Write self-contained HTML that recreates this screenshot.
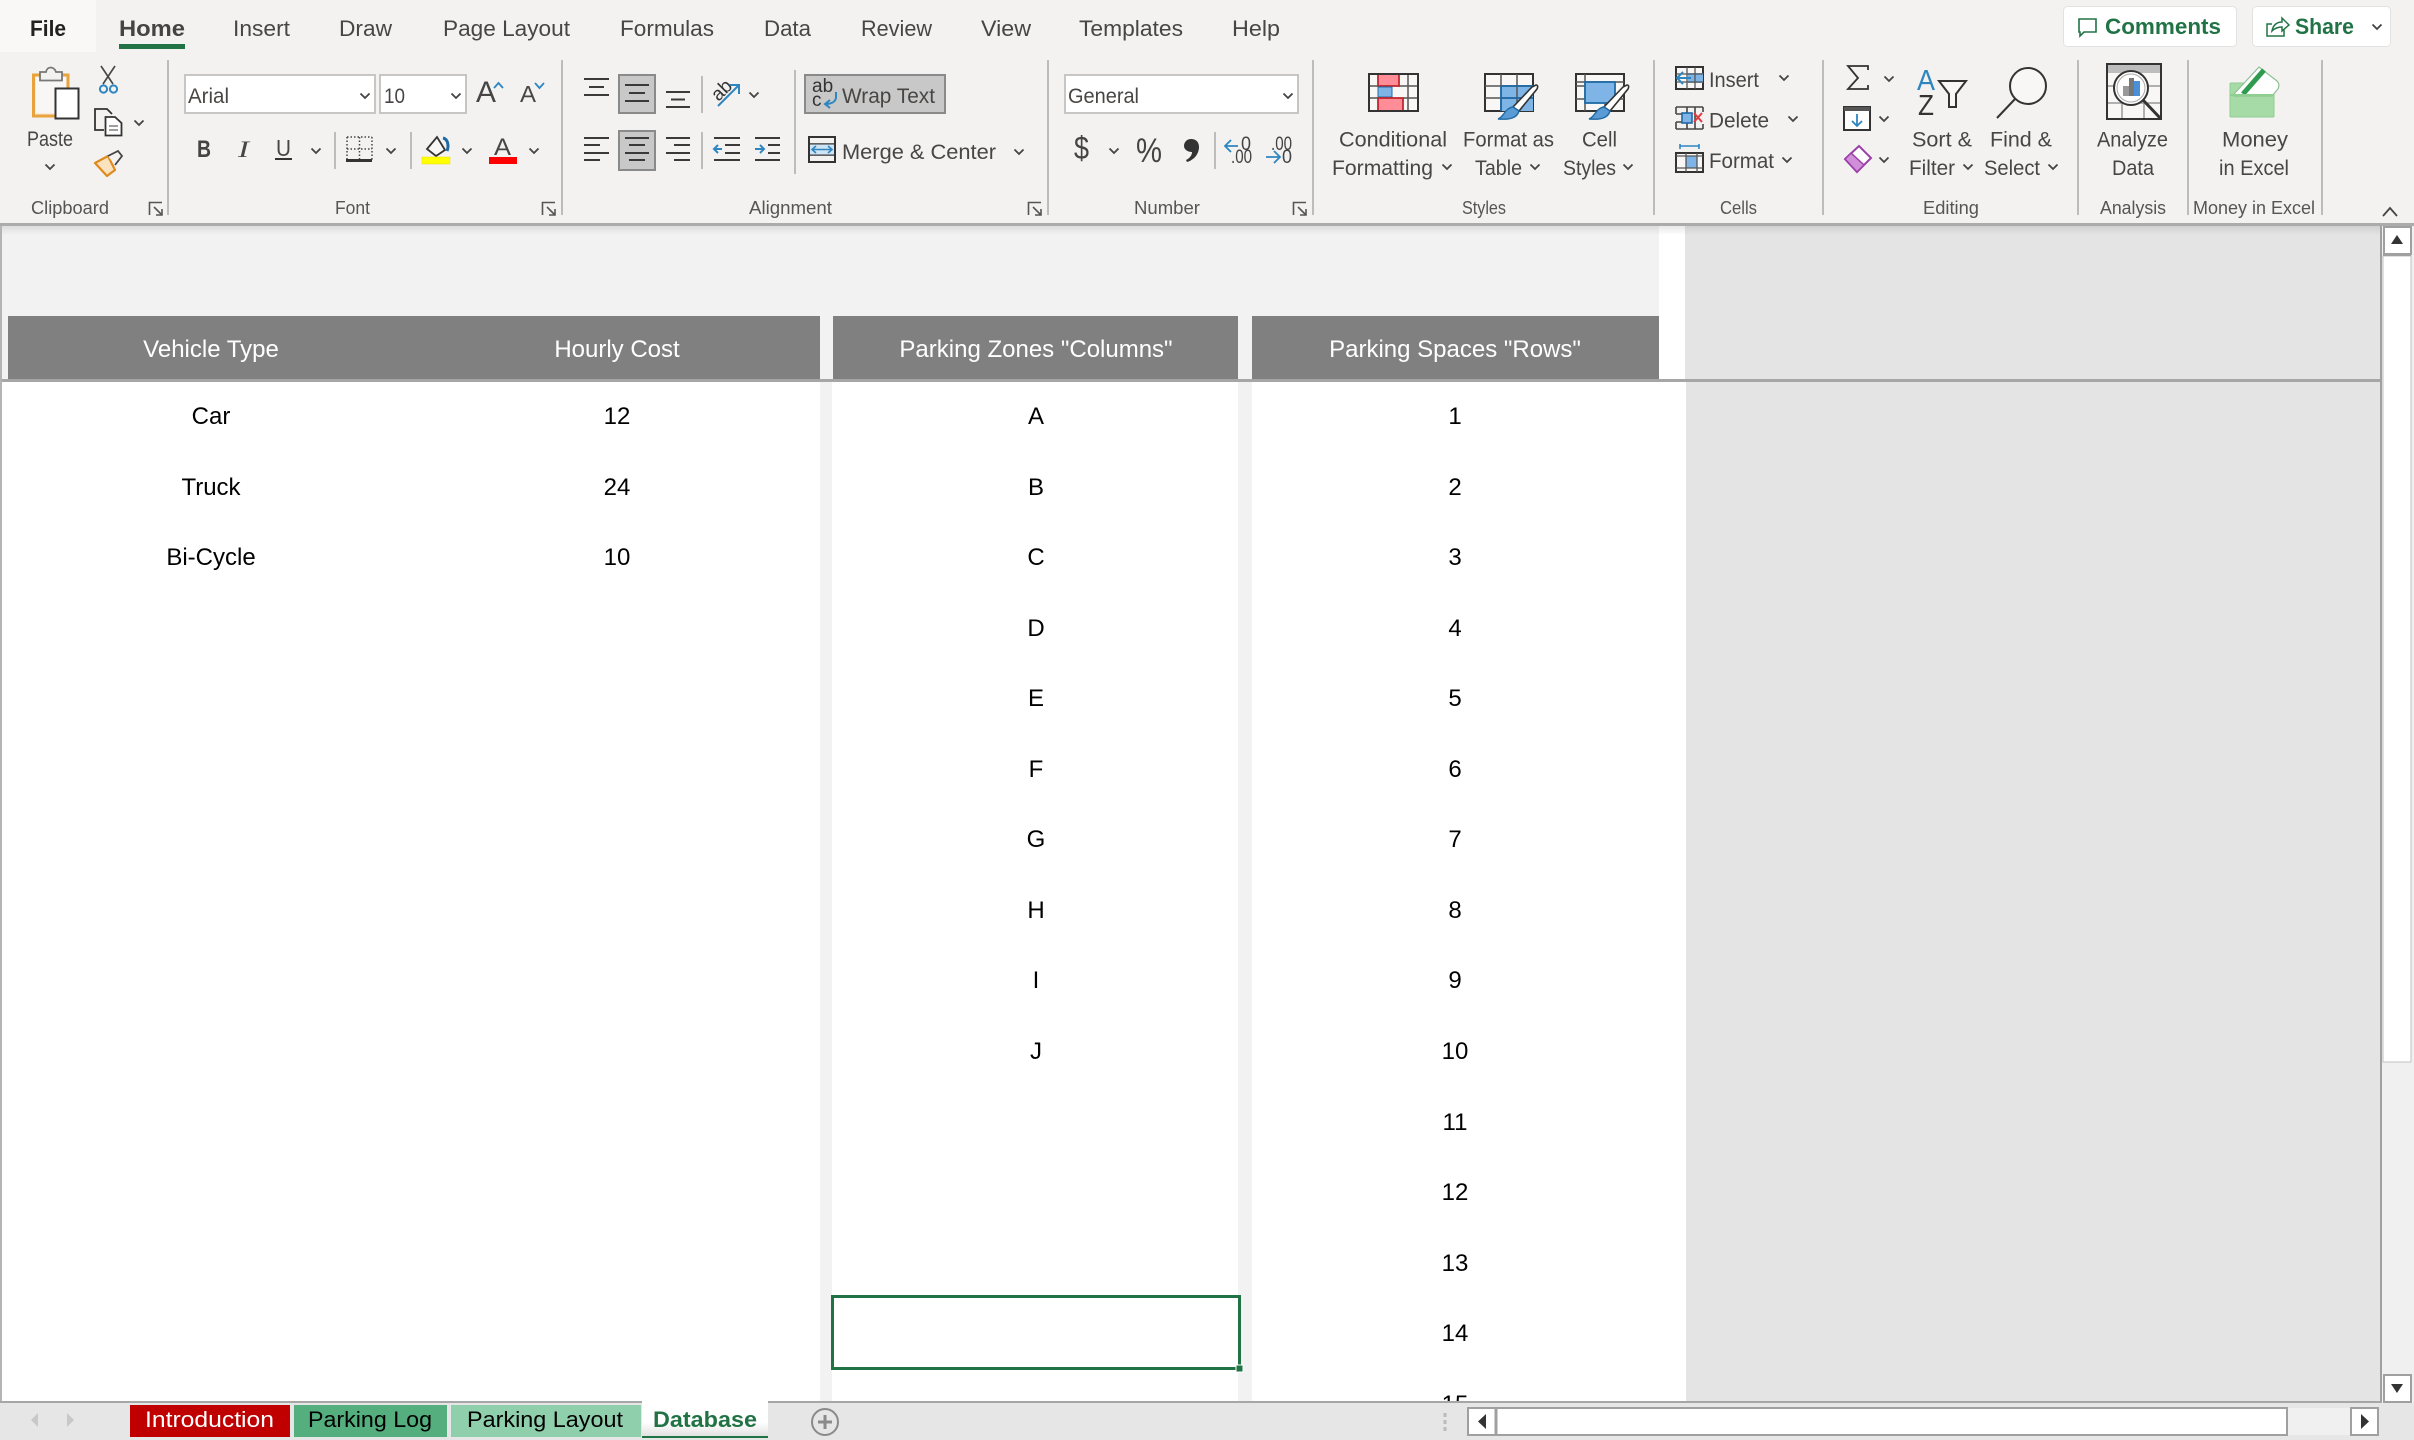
<!DOCTYPE html>
<html><head><meta charset="utf-8"><title>Excel</title>
<style>
html,body{margin:0;padding:0;background:#f3f2f1;width:2414px;height:1440px;overflow:hidden}
svg{display:block;position:absolute;left:0;top:0}
text{font-family:"Liberation Sans",Arial,sans-serif;fill:#484644;font-size:21px}
.t{font-size:22px}
.g{font-size:18px;fill:#555}
.c{font-size:24px;fill:#000;text-anchor:middle}
.h{font-size:24px;fill:#fff;text-anchor:middle}
.s{fill:none;stroke:#333;stroke-width:2}
.sep{stroke:#bcbcbc;stroke-width:2}
.l{stroke:#3a3a3a;stroke-width:2}
</style></head><body>
<svg width="2414" height="1440" viewBox="0 0 2414 1440" xmlns="http://www.w3.org/2000/svg" stroke-linejoin="miter">
<defs>
<path id="v" d="M-4.5-2.5L0 2L4.5-2.5" fill="none" stroke="#444" stroke-width="1.8"/>
<g id="launch" fill="none" stroke="#555" stroke-width="1.6"><path d="M.5 13V.5H13"/><path d="M5 5L13 13M13 7V13H7"/></g>
<linearGradient id="sh" x1="0" y1="0" x2="0" y2="1"><stop offset="0" stop-color="#000" stop-opacity=".09"/><stop offset="1" stop-color="#000" stop-opacity="0"/></linearGradient>
<linearGradient id="db" x1="0" y1="0" x2="0" y2="1"><stop offset="0" stop-color="#fff"/><stop offset=".6" stop-color="#fff"/><stop offset="1" stop-color="#e2e2e2"/></linearGradient>
</defs>

<!-- ribbon bg -->
<rect width="2414" height="1440" fill="#f3f2f1"/>
<rect width="96" height="52" fill="#f9f8f7"/>

<!-- menu tabs -->
<text x="30" y="36" class="t" style="fill:#222;font-weight:700" textLength="36" lengthAdjust="spacingAndGlyphs">File</text>
<text x="119" y="36" class="t" style="font-weight:700;fill:#444" textLength="66" lengthAdjust="spacingAndGlyphs">Home</text>
<rect x="119" y="44" width="66" height="5" fill="#217346"/>
<text x="233" y="36" class="t" textLength="57" lengthAdjust="spacingAndGlyphs">Insert</text>
<text x="339" y="36" class="t" textLength="53" lengthAdjust="spacingAndGlyphs">Draw</text>
<text x="443" y="36" class="t" textLength="127" lengthAdjust="spacingAndGlyphs">Page Layout</text>
<text x="620" y="36" class="t" textLength="94" lengthAdjust="spacingAndGlyphs">Formulas</text>
<text x="764" y="36" class="t" textLength="47" lengthAdjust="spacingAndGlyphs">Data</text>
<text x="861" y="36" class="t" textLength="71" lengthAdjust="spacingAndGlyphs">Review</text>
<text x="981" y="36" class="t" textLength="50" lengthAdjust="spacingAndGlyphs">View</text>
<text x="1079" y="36" class="t" textLength="104" lengthAdjust="spacingAndGlyphs">Templates</text>
<text x="1232" y="36" class="t" textLength="48" lengthAdjust="spacingAndGlyphs">Help</text>

<!-- comments/share -->
<rect x="2063.5" y="6.5" width="173" height="40" rx="4" fill="#fff" stroke="#e4e2e0"/>
<path d="M2079 19H2096V32H2084L2080 36V32H2079Z" fill="none" stroke="#217346" stroke-width="1.6"/>
<text x="2105" y="34" class="t" style="font-weight:700;fill:#217346" textLength="116" lengthAdjust="spacingAndGlyphs">Comments</text>
<rect x="2252.5" y="6.5" width="138" height="40" rx="4" fill="#fff" stroke="#e4e2e0"/>
<path d="M2272 24H2267V36H2284V30M2272 31C2273 25 2277 22 2282 22V18L2289 25L2282 31V27C2278 27 2275 28 2272 31Z" fill="none" stroke="#217346" stroke-width="1.5"/>
<text x="2295" y="34" class="t" style="font-weight:700;fill:#217346" textLength="59" lengthAdjust="spacingAndGlyphs">Share</text>
<use href="#v" x="2377" y="27"/>

<!-- separators -->
<line class="sep" x1="168" y1="60" x2="168" y2="215"/>
<line class="sep" x1="562" y1="60" x2="562" y2="215"/>
<line class="sep" x1="1048" y1="60" x2="1048" y2="215"/>
<line class="sep" x1="1313" y1="60" x2="1313" y2="215"/>
<line class="sep" x1="1654" y1="60" x2="1654" y2="215"/>
<line class="sep" x1="1823" y1="60" x2="1823" y2="215"/>
<line class="sep" x1="2078" y1="60" x2="2078" y2="215"/>
<line class="sep" x1="2188" y1="60" x2="2188" y2="215"/>
<line class="sep" x1="2322" y1="60" x2="2322" y2="215"/>
<line class="sep" x1="335" y1="132" x2="335" y2="169"/>
<line class="sep" x1="411" y1="132" x2="411" y2="169"/>
<line class="sep" x1="702" y1="76" x2="702" y2="113"/>
<line class="sep" x1="702" y1="132" x2="702" y2="169"/>
<line class="sep" x1="795" y1="70" x2="795" y2="174"/>
<line class="sep" x1="1215" y1="132" x2="1215" y2="169"/>

<!-- group labels -->
<text x="31" y="214" class="g" textLength="78" lengthAdjust="spacingAndGlyphs">Clipboard</text>
<text x="335" y="214" class="g" textLength="35" lengthAdjust="spacingAndGlyphs">Font</text>
<text x="749" y="214" class="g" textLength="83" lengthAdjust="spacingAndGlyphs">Alignment</text>
<text x="1134" y="214" class="g" textLength="66" lengthAdjust="spacingAndGlyphs">Number</text>
<text x="1462" y="214" class="g" textLength="44" lengthAdjust="spacingAndGlyphs">Styles</text>
<text x="1720" y="214" class="g" textLength="37" lengthAdjust="spacingAndGlyphs">Cells</text>
<text x="1923" y="214" class="g" textLength="56" lengthAdjust="spacingAndGlyphs">Editing</text>
<text x="2100" y="214" class="g" textLength="66" lengthAdjust="spacingAndGlyphs">Analysis</text>
<text x="2193" y="214" class="g" textLength="122" lengthAdjust="spacingAndGlyphs">Money in Excel</text>
<use href="#launch" x="149" y="202"/>
<use href="#launch" x="542" y="202"/>
<use href="#launch" x="1028" y="202"/>
<use href="#launch" x="1293" y="202"/>
<path d="M2383 216L2390 208L2397 216" fill="none" stroke="#444" stroke-width="1.8"/>

<!-- clipboard -->
<path d="M43 75H33.5V116H57" fill="#f8ead6" stroke="#e8a33d" stroke-width="3"/>
<path d="M58 75H68V88" fill="none" stroke="#e8a33d" stroke-width="3"/>
<path d="M36 77H66V87H56V113H36Z" fill="#f8f7f5"/>
<path d="M40 80.5V72H46C47 66 54 66 56 72H62V80.5Z" fill="#f3f2f1" stroke="#777" stroke-width="1.8"/>
<rect x="55.5" y="88.5" width="23" height="30" fill="#fff" stroke="#333" stroke-width="2"/>
<text x="27" y="146" textLength="46" lengthAdjust="spacingAndGlyphs">Paste</text>
<use href="#v" x="50" y="167"/>
<path d="M101 66L113 84M115 66L103 84" fill="none" stroke="#444" stroke-width="1.6"/>
<circle cx="103.5" cy="89" r="3.6" fill="none" stroke="#2e86c1" stroke-width="2"/>
<circle cx="113.5" cy="89" r="3.6" fill="none" stroke="#2e86c1" stroke-width="2"/>
<path d="M104 130H95V109H107L112 114" fill="none" stroke="#333" stroke-width="1.8"/>
<path d="M105.5 117H115L121.5 123V135.5H105.5Z" fill="#fff" stroke="#333" stroke-width="1.8"/>
<path d="M109 126H118M109 130H118" stroke="#666" stroke-width="1.3"/>
<use href="#v" x="139" y="123"/>
<path d="M95 163L108 156L115 170L107 176Z" fill="#fbe3bf" stroke="#e08a1e" stroke-width="2.2" stroke-linejoin="round"/>
<path d="M108 156L118 151L122 156L115 165" fill="#f3f2f1" stroke="#444" stroke-width="1.8"/>

<!-- font -->
<rect x="185" y="75" width="190" height="38" fill="#fff" stroke="#c8c6c4" stroke-width="2"/>
<text x="188" y="103" textLength="41" lengthAdjust="spacingAndGlyphs">Arial</text>
<use href="#v" x="365" y="96"/>
<rect x="380" y="75" width="86" height="38" fill="#fff" stroke="#c8c6c4" stroke-width="2"/>
<text x="384" y="103" textLength="21" lengthAdjust="spacingAndGlyphs">10</text>
<use href="#v" x="456" y="96"/>
<text x="476" y="102" style="font-size:30px" textLength="20" lengthAdjust="spacingAndGlyphs">A</text>
<path d="M494 88L498.5 83L503 88" fill="none" stroke="#2e86c1" stroke-width="1.8"/>
<text x="520" y="102" style="font-size:23px" textLength="16" lengthAdjust="spacingAndGlyphs">A</text>
<path d="M535 83L539.5 88L544 83" fill="none" stroke="#2e86c1" stroke-width="1.8"/>
<text x="197" y="157" style="font-size:24px;font-weight:700;fill:#444" textLength="14" lengthAdjust="spacingAndGlyphs">B</text>
<text x="238" y="157" style="font-size:23px;font-style:italic;font-family:'Liberation Serif',serif" textLength="11" lengthAdjust="spacingAndGlyphs">I</text>
<text x="276" y="156" style="font-size:23px" textLength="15" lengthAdjust="spacingAndGlyphs">U</text>
<rect x="275" y="158" width="17" height="2" fill="#333"/>
<use href="#v" x="316" y="151"/>
<path d="M347 137H372M347 149H372M347 137V160M372 137V160M359.5 137V160" fill="none" stroke="#444" stroke-width="1.5" stroke-dasharray="1.5 2"/>
<rect x="346" y="159" width="26" height="3" fill="#333"/>
<use href="#v" x="391" y="151"/>
<path d="M427 149L437 137L445 150L436 156Z" fill="#f8f7f5" stroke="#333" stroke-width="1.8"/>
<path d="M443 138C448 139 449 146 447 151" fill="none" stroke="#1f6aa5" stroke-width="3"/>
<rect x="422" y="157" width="28" height="7" fill="#ffff00" stroke="#eedd00" stroke-width=".5"/>
<use href="#v" x="467" y="151"/>
<text x="494" y="155" style="font-size:24px" textLength="17" lengthAdjust="spacingAndGlyphs">A</text>
<rect x="489" y="157" width="28" height="7" fill="#ff0000"/>
<use href="#v" x="534" y="151"/>

<!-- alignment -->
<rect x="619" y="75" width="36" height="38" fill="#c8c8c8" stroke="#8a8a8a" stroke-width="2"/>
<rect x="619" y="131" width="36" height="39" fill="#c8c8c8" stroke="#8a8a8a" stroke-width="2"/>
<path class="l" d="M584 79H609M589 87H604M584 95H609M625 85H649M629 93H645M625 101H649M666 92H690M671 99.5H685M666 107H690"/>
<path class="l" d="M584 138H609M584 145H600M584 153H609M584 160H600"/>
<path class="l" d="M625 138H649M629 145H645M625 153H649M629 160H645"/>
<path class="l" d="M666 138H690M674 145H690M666 153H690M674 160H690"/>
<g transform="translate(714,80)">
<text x="-3" y="16" style="font-size:19px;fill:#333" transform="rotate(-45 8 10)">ab</text>
<path d="M4 26L24 6M16 5H25V14" fill="none" stroke="#2e86c1" stroke-width="2"/>
</g>
<use href="#v" x="754" y="95"/>
<path class="l" d="M714 138H740M725 145H740M725 153H740M714 160H740"/>
<path d="M722 149H714M718 145L714 149L718 153" fill="none" stroke="#2e86c1" stroke-width="2"/>
<path class="l" d="M755 138H780M768 145H780M768 153H780M755 160H780"/>
<path d="M755 149H764M760 145L764 149L760 153" fill="none" stroke="#2e86c1" stroke-width="2"/>
<rect x="805" y="75" width="140" height="38" fill="#c8c8c8" stroke="#8a8a8a" stroke-width="2"/>
<text x="812" y="92" style="font-size:19px;fill:#333">ab</text>
<text x="812" y="106" style="font-size:19px;fill:#333">c</text>
<path d="M836 92V97C836 102 831 104 825 104M830 100L825 104L830 108" fill="none" stroke="#2e86c1" stroke-width="2"/>
<text x="842" y="103" textLength="93" lengthAdjust="spacingAndGlyphs">Wrap Text</text>
<rect x="809" y="137" width="26" height="25" fill="#f3f2f1" stroke="#333" stroke-width="2"/>
<path d="M809 144H835M809 155H835" stroke="#333" stroke-width="1.5"/>
<rect x="810" y="144.5" width="24" height="10" fill="#cfe4f4"/>
<path d="M812 149.5H832M816 146L812 149.5L816 153M828 146L832 149.5L828 153" fill="none" stroke="#2e86c1" stroke-width="1.6"/>
<text x="842" y="159" textLength="154" lengthAdjust="spacingAndGlyphs">Merge &amp; Center</text>
<use href="#v" x="1019" y="152"/>

<!-- number -->
<rect x="1065" y="75" width="233" height="38" fill="#fff" stroke="#c8c6c4" stroke-width="2"/>
<text x="1068" y="103" textLength="71" lengthAdjust="spacingAndGlyphs">General</text>
<use href="#v" x="1288" y="96"/>
<text x="1074" y="159" style="font-size:32px;fill:#444" textLength="15" lengthAdjust="spacingAndGlyphs">$</text>
<use href="#v" x="1114" y="151"/>
<text x="1136" y="162" style="font-size:34px;fill:#444" textLength="26" lengthAdjust="spacingAndGlyphs">%</text>
<path d="M1191 139C1197 139 1199 143 1199 147C1199 154 1194 160 1187 162L1186 160C1190 158 1192 155 1192 152C1187 152 1184 149 1184 146C1184 142 1187 139 1191 139Z" fill="#333"/>
<path d="M1226 146H1238M1231 140L1225 146L1231 152" fill="none" stroke="#2e86c1" stroke-width="1.8"/>
<text x="1241" y="150" style="font-size:19px;fill:#444" textLength="10" lengthAdjust="spacingAndGlyphs">0</text>
<text x="1231" y="163" style="font-size:19px;fill:#444" textLength="21" lengthAdjust="spacingAndGlyphs">.00</text>
<text x="1271" y="150" style="font-size:19px;fill:#444" textLength="21" lengthAdjust="spacingAndGlyphs">.00</text>
<path d="M1266 157H1279M1274 151L1280 157L1274 163" fill="none" stroke="#2e86c1" stroke-width="1.8"/>
<text x="1282" y="163" style="font-size:19px;fill:#444" textLength="10" lengthAdjust="spacingAndGlyphs">0</text>

<!-- styles -->
<g>
<rect x="1369" y="74" width="49" height="37" fill="#f8f7f5"/>
<rect x="1378" y="74" width="21" height="12" fill="#ff8c96" stroke="#c0272d" stroke-width="1.8"/>
<rect x="1378" y="87" width="14" height="10" fill="#7fb5e6" stroke="#1f6aa5" stroke-width="1"/>
<rect x="1378" y="98" width="25" height="13" fill="#ff8c96" stroke="#c0272d" stroke-width="1.8"/>
<path d="M1369 86H1378M1399 86H1417M1369 98H1378M1403 98H1417M1408 74V111" stroke="#555" stroke-width="1.5"/>
<rect x="1369" y="74" width="49" height="37" fill="none" stroke="#333" stroke-width="2"/>
</g>
<g>
<rect x="1485" y="74" width="48" height="37" fill="#f8f7f5" stroke="#333" stroke-width="2"/>
<rect x="1501" y="85" width="32" height="26" fill="#7fb5e6"/>
<path d="M1485 86H1533M1485 98H1533M1501 74V111M1517 74V111" stroke="#555" stroke-width="1.5"/>
<path d="M1501 86H1533M1501 98H1533M1501 86V111" stroke="#1f6aa5" stroke-width="1.8" fill="none"/>
<path d="M1536 85C1538 85 1538 87 1537 89L1519 111L1513 107L1532 87Z" fill="#fff" stroke="#333" stroke-width="1.6"/>
<path d="M1513 107L1519 111C1517 118 1510 120 1498 119C1504 117 1505 108 1513 107Z" fill="#5b9bd5" stroke="#1f6aa5" stroke-width="1.4"/>
</g>
<g>
<rect x="1576" y="74" width="48" height="37" fill="#f8f7f5" stroke="#333" stroke-width="2"/>
<path d="M1585 86H1576M1576 99H1624M1624 82H1576M1585 74V111M1605 99V111" stroke="#555" stroke-width="1.5"/>
<rect x="1585" y="82" width="30" height="21" fill="#7fb5e6" stroke="#1f6aa5" stroke-width="1.8"/>
<path d="M1627 85C1629 85 1629 87 1628 89L1610 111L1604 107L1623 87Z" fill="#fff" stroke="#333" stroke-width="1.6"/>
<path d="M1604 107L1610 111C1608 118 1601 120 1589 119C1595 117 1596 108 1604 107Z" fill="#5b9bd5" stroke="#1f6aa5" stroke-width="1.4"/>
</g>
<text x="1339" y="146.5" textLength="108" lengthAdjust="spacingAndGlyphs">Conditional</text>
<text x="1332" y="175" textLength="101" lengthAdjust="spacingAndGlyphs">Formatting</text>
<use href="#v" x="1447" y="167"/>
<text x="1463" y="146.5" textLength="91" lengthAdjust="spacingAndGlyphs">Format as</text>
<text x="1475" y="175" textLength="47" lengthAdjust="spacingAndGlyphs">Table</text>
<use href="#v" x="1535" y="167"/>
<text x="1582" y="146.5" textLength="35" lengthAdjust="spacingAndGlyphs">Cell</text>
<text x="1563" y="175" textLength="53" lengthAdjust="spacingAndGlyphs">Styles</text>
<use href="#v" x="1628" y="167"/>

<!-- cells -->
<g>
<rect x="1676" y="67" width="27" height="22" fill="#f8f7f5" stroke="#333" stroke-width="2"/>
<rect x="1688" y="73" width="15" height="10" fill="#7fb5e6"/>
<path d="M1676 74H1703M1676 82H1703M1687 67V89M1695 67V89" stroke="#555" stroke-width="1.3"/>
<path d="M1691 78H1677M1683 72L1677 78L1683 84" fill="none" stroke="#2e86c1" stroke-width="2"/>
</g>
<text x="1709" y="87" textLength="50" lengthAdjust="spacingAndGlyphs">Insert</text>
<use href="#v" x="1784" y="78"/>
<g>
<path d="M1676 107H1703M1676 129H1703M1676 107V114M1676 122V129M1703 107V112M1703 124V129M1676 114H1684M1676 122H1684M1687 107V129M1695 107V129" fill="none" stroke="#444" stroke-width="1.6"/>
<rect x="1682" y="113" width="10" height="10" fill="#7fb5e6" stroke="#1f6aa5" stroke-width="1.6"/>
<path d="M1694 113L1702 122M1702 113L1694 122" stroke="#e03a3a" stroke-width="2"/>
</g>
<text x="1709" y="127.500" textLength="60" lengthAdjust="spacingAndGlyphs">Delete</text>
<use href="#v" x="1793" y="119"/>
<g>
<rect x="1676" y="153" width="27" height="19" fill="#f8f7f5" stroke="#333" stroke-width="2"/>
<rect x="1686" y="156" width="11" height="12" fill="#7fb5e6" stroke="#2e86c1"/>
<path d="M1676 156H1703M1676 168H1703M1686 153V172M1697 153V172" stroke="#555" stroke-width="1.3"/>
<path d="M1680 146H1699M1680 144V149M1699 144V149" stroke="#2e86c1" stroke-width="1.6" fill="none"/>
</g>
<text x="1709" y="168" textLength="65" lengthAdjust="spacingAndGlyphs">Format</text>
<use href="#v" x="1787" y="160"/>

<!-- editing -->
<path d="M1868 70V66H1848L1858 78L1848 89H1868V85" fill="none" stroke="#333" stroke-width="1.8"/>
<use href="#v" x="1889" y="79"/>
<rect x="1844" y="107" width="26" height="23" fill="#fff" stroke="#333" stroke-width="2"/>
<rect x="1844" y="107" width="26" height="4" fill="#555"/>
<path d="M1857 114V126M1852 121L1857 126L1862 121" fill="none" stroke="#2e86c1" stroke-width="1.8"/>
<use href="#v" x="1884" y="119"/>
<path d="M1845 159L1859 146L1871 158L1857 172Z" fill="#fff" stroke="#9b3fa8" stroke-width="2"/>
<path d="M1845 159L1851 153L1864 165L1857 172Z" fill="#d08fd8" stroke="#9b3fa8" stroke-width="1.5"/>
<use href="#v" x="1884" y="160"/>
<text x="1917" y="90" style="font-size:29px;fill:#2e86c1" textLength="18" lengthAdjust="spacingAndGlyphs">A</text>
<text x="1918" y="115" style="font-size:29px;fill:#333" textLength="16" lengthAdjust="spacingAndGlyphs">Z</text>
<path d="M1939 81H1966L1956 94V107H1949V94Z" fill="#f8f7f5" stroke="#333" stroke-width="2"/>
<circle cx="2028" cy="86" r="18" fill="#f8f7f5" stroke="#333" stroke-width="2"/>
<path d="M2015 99L1997 118" stroke="#333" stroke-width="2"/>
<text x="1912" y="146.5" textLength="60" lengthAdjust="spacingAndGlyphs">Sort &amp;</text>
<text x="1909" y="175" textLength="46" lengthAdjust="spacingAndGlyphs">Filter</text>
<use href="#v" x="1968" y="167"/>
<text x="1990" y="146.5" textLength="62" lengthAdjust="spacingAndGlyphs">Find &amp;</text>
<text x="1984" y="175" textLength="56" lengthAdjust="spacingAndGlyphs">Select</text>
<use href="#v" x="2053" y="167"/>

<!-- analyze -->
<rect x="2107" y="64" width="54" height="55" fill="#f8f7f5" stroke="#333" stroke-width="2"/>
<rect x="2108" y="65" width="52" height="8" fill="#bdbdbd"/>
<path d="M2108 86H2160M2108 103H2160M2122 103V118M2144 103V118" stroke="#999" stroke-width="1.5"/>
<circle cx="2131" cy="88" r="17" fill="#fff" stroke="#333" stroke-width="2"/>
<circle cx="2131" cy="88" r="14" fill="none" stroke="#aaa" stroke-width="1"/>
<rect x="2123" y="86" width="6" height="10" fill="#999"/>
<rect x="2129" y="78" width="5" height="18" fill="#777"/>
<rect x="2134" y="81" width="6" height="15" fill="#4a90d9"/>
<path d="M2143 100L2161 119" stroke="#333" stroke-width="3"/>
<text x="2097" y="146.5" textLength="71" lengthAdjust="spacingAndGlyphs">Analyze</text>
<text x="2112" y="175" textLength="42" lengthAdjust="spacingAndGlyphs">Data</text>

<!-- money -->
<rect x="2230" y="83" width="44" height="34" rx="1" fill="#a6dba8" stroke="#8ccf90"/>
<path d="M2234 94L2259 67L2277 81C2280 84 2279 88 2277 90L2272 96H2234Z" fill="#fff" stroke="#8fbf94" stroke-width="1.2"/>
<path d="M2243 94L2264 70" stroke="#2e9b4f" stroke-width="5"/>
<rect x="2230" y="94" width="44" height="2" fill="#8ccf90"/>
<text x="2222" y="146.5" textLength="66" lengthAdjust="spacingAndGlyphs">Money</text>
<text x="2219" y="175" textLength="70" lengthAdjust="spacingAndGlyphs">in Excel</text>

<!-- sheet -->
<rect x="0" y="223" width="2414" height="3" fill="#ababab"/>
<rect x="0" y="226" width="2382" height="1176" fill="#f2f2f2"/>
<rect x="0" y="226" width="2" height="1176" fill="#b4b4b4"/>
<rect x="1659" y="226" width="27" height="1176" fill="#fff"/>
<rect x="1685" y="226" width="695" height="1176" fill="#e4e4e4"/>
<rect x="2" y="380" width="818" height="1022" fill="#fff"/>
<rect x="832" y="380" width="406" height="1022" fill="#fff"/>
<rect x="1252" y="380" width="434" height="1022" fill="#fff"/>
<rect x="8" y="316" width="812" height="63" fill="#808080"/>
<rect x="833" y="316" width="405" height="63" fill="#808080"/>
<rect x="1252" y="316" width="407" height="63" fill="#808080"/>
<rect x="2" y="379" width="2378" height="3" fill="#a6a6a6"/>
<rect x="2" y="226" width="2378" height="9" fill="url(#sh)"/>
<rect x="2380" y="226" width="2" height="1176" fill="#a0a0a0"/>

<text class="h" x="211" y="357">Vehicle Type</text>
<text class="h" x="617" y="357">Hourly Cost</text>
<text class="h" x="1036" y="357">Parking Zones "Columns"</text>
<text class="h" x="1455" y="357">Parking Spaces "Rows"</text>

<text class="c" x="211" y="424">Car</text><text class="c" x="617" y="424">12</text>
<text class="c" x="211" y="495">Truck</text><text class="c" x="617" y="495">24</text>
<text class="c" x="211" y="565">Bi-Cycle</text><text class="c" x="617" y="565">10</text>
<text class="c" x="1036" y="424">A</text><text class="c" x="1036" y="495">B</text><text class="c" x="1036" y="565">C</text><text class="c" x="1036" y="636">D</text><text class="c" x="1036" y="706">E</text><text class="c" x="1036" y="777">F</text><text class="c" x="1036" y="847">G</text><text class="c" x="1036" y="918">H</text><text class="c" x="1036" y="988">I</text><text class="c" x="1036" y="1059">J</text>
<text class="c" x="1455" y="424">1</text><text class="c" x="1455" y="495">2</text><text class="c" x="1455" y="565">3</text><text class="c" x="1455" y="636">4</text><text class="c" x="1455" y="706">5</text><text class="c" x="1455" y="777">6</text><text class="c" x="1455" y="847">7</text><text class="c" x="1455" y="918">8</text><text class="c" x="1455" y="988">9</text><text class="c" x="1455" y="1059">10</text><text class="c" x="1455" y="1130">11</text><text class="c" x="1455" y="1200">12</text><text class="c" x="1455" y="1271">13</text><text class="c" x="1455" y="1341">14</text><text class="c" x="1455" y="1412">15</text>

<!-- selection -->
<rect x="832.5" y="1296.5" width="407" height="72" fill="#fff" stroke="#217346" stroke-width="3"/>
<rect x="1236" y="1365" width="7" height="7" fill="#217346" stroke="#fff"/>

<!-- vscroll -->
<rect x="2382" y="226" width="32" height="1177" fill="#f0f0f0"/>
<rect x="2383" y="256" width="28" height="806" fill="#fff" stroke="#c0c0c0" stroke-width="1"/>
<rect x="2384" y="227" width="27" height="27" fill="#fff" stroke="#a0a0a0" stroke-width="2"/>
<rect x="2383" y="253" width="28" height="3" fill="#a0a0a0"/>
<path d="M2391 244H2403L2397 235Z" fill="#333"/>
<rect x="2384" y="1375" width="27" height="27" fill="#fff" stroke="#a0a0a0" stroke-width="2"/>
<path d="M2391 1384H2403L2397 1393Z" fill="#333"/>

<!-- bottom bar -->
<rect x="0" y="1403" width="2414" height="37" fill="#e6e6e6"/>
<rect x="0" y="1401" width="2382" height="2" fill="#a6a6a6"/>
<path d="M38 1413L31 1420L38 1427Z" fill="#c8c8c8"/>
<path d="M67 1413L74 1420L67 1427Z" fill="#c8c8c8"/>
<rect x="130" y="1405" width="160" height="32" fill="#c00000"/>
<text x="145" y="1427" style="font-size:22px;fill:#fff" textLength="129" lengthAdjust="spacingAndGlyphs">Introduction</text>
<rect x="294" y="1405" width="153" height="32" fill="#54ae7e"/>
<text x="308" y="1427" style="font-size:22px;fill:#000" textLength="124" lengthAdjust="spacingAndGlyphs">Parking Log</text>
<rect x="451" y="1405" width="190" height="32" fill="#8fcfab"/>
<text x="467" y="1427" style="font-size:22px;fill:#000" textLength="156" lengthAdjust="spacingAndGlyphs">Parking Layout</text>
<rect x="642" y="1401" width="126" height="35" fill="url(#db)"/>
<rect x="642" y="1436" width="126" height="2" fill="#217346"/>
<text x="653" y="1427" style="font-size:22px;font-weight:700;fill:#217346" textLength="104" lengthAdjust="spacingAndGlyphs">Database</text>
<circle cx="825" cy="1422" r="13" fill="none" stroke="#8a8a8a" stroke-width="2"/>
<path d="M818 1422H832M825 1415V1429" stroke="#8a8a8a" stroke-width="3"/>
<path d="M1445 1413V1417M1445 1420V1424M1445 1427V1431" stroke="#bbb" stroke-width="3"/>
<rect x="1468" y="1408" width="909" height="27" fill="#f0f0f0" stroke="#a0a0a0" stroke-width="0"/>
<rect x="1468" y="1408" width="819" height="27" fill="#fff" stroke="#a0a0a0" stroke-width="2"/>
<path d="M1496 1408V1435" stroke="#a0a0a0" stroke-width="3"/>
<path d="M1486 1414L1478 1421.5L1486 1429Z" fill="#333"/>
<rect x="2351" y="1408" width="27" height="27" fill="#fff" stroke="#a0a0a0" stroke-width="2"/>
<path d="M2361 1414L2369 1421.5L2361 1429Z" fill="#333"/>
</svg>
</body></html>
